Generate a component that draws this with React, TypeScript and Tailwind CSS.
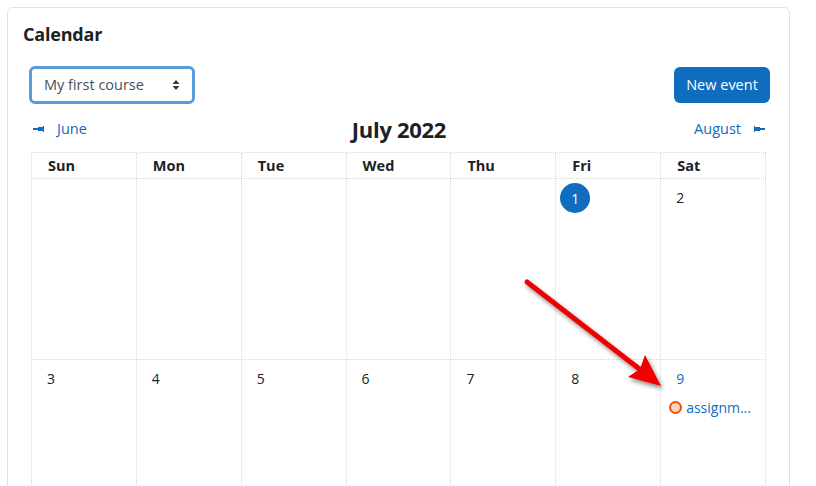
import React from "react";

const days = ["Sun", "Mon", "Tue", "Wed", "Thu", "Fri", "Sat"];

type Cell = { day?: number; today?: boolean; link?: boolean; event?: string };

const weeks: Cell[][] = [
  [{}, {}, {}, {}, {}, { day: 1, today: true }, { day: 2 }],
  [
    { day: 3 },
    { day: 4 },
    { day: 5 },
    { day: 6 },
    { day: 7 },
    { day: 8 },
    { day: 9, link: true, event: "assignm..." },
  ],
];

const PrevArrow = () => (
  <svg width="11" height="6" viewBox="0 0 11 6" className="mr-[13px]">
    <rect x="0" y="2" width="5" height="2" fill="#0f6cbf" />
    <rect x="5" y="1" width="5" height="4" fill="#0f6cbf" />
    <rect x="10" y="0" width="1" height="6" fill="#0f6cbf" />
  </svg>
);

const NextArrow = () => (
  <svg width="11" height="6" viewBox="0 0 11 6" className="ml-[13px]">
    <rect x="0" y="0" width="1" height="6" fill="#0f6cbf" />
    <rect x="1" y="1" width="5" height="4" fill="#0f6cbf" />
    <rect x="6" y="2" width="5" height="2" fill="#0f6cbf" />
  </svg>
);

const RedArrow = () => (
  <svg className="absolute left-0 top-0 pointer-events-none" width="816" height="486">
    <defs>
      <filter id="shadow" x="-20%" y="-20%" width="140%" height="140%">
        <feDropShadow dx="2" dy="3" stdDeviation="2" floodColor="#000" floodOpacity="0.45" />
      </filter>
    </defs>
    <g filter="url(#shadow)">
      <line x1="527" y1="282" x2="642" y2="371" stroke="#ee0000" strokeWidth="5" strokeLinecap="round" />
      <polygon points="661,386 628,377 640,369 645,355" fill="#ee0000" />
    </g>
  </svg>
);

export default function App() {
  return (
    <div
      className="relative w-[816px] h-[486px] overflow-hidden bg-white text-[#1d2125]"
      style={{ fontFamily: '"Open Sans", "Liberation Sans", sans-serif' }}
    >
      <div className="ml-[7px] mt-[7px] w-[783px] h-[520px] border border-[#dee2e6] rounded-[6px] px-[15px] pt-[13px]">
        <h2 className="text-[18px] font-bold leading-[26px] tracking-[-0.2px]">Calendar</h2>

        <div className="mt-[19px] ml-[6px] flex items-center justify-between w-[741px]">
          <div className="w-[166px] h-[38px] rounded-[6px] border-[3px] border-[#5b9bd9] flex items-center justify-between pl-[12px] pr-[12px]">
            <span className="text-[14.5px] text-[#495057]">My first course</span>
            <svg width="8" height="12" viewBox="0 0 8 12">
              <polygon points="4,1 7.5,5 0.5,5" fill="#343a40" />
              <polygon points="0.5,7 7.5,7 4,11" fill="#343a40" />
            </svg>
          </div>
          <button className="w-[96px] h-[36px] rounded-[6px] bg-[#0f6cbf] text-white text-[14.5px]">
            New event
          </button>
        </div>

        <div className="mt-[11px] ml-[10px] w-[732px] flex items-center justify-between h-[28px]">
          <a className="flex items-center text-[#0f6cbf] text-[14.5px] w-[110px]">
            <PrevArrow />
            June
          </a>
          <h3 className="text-[22px] font-bold tracking-[-0.3px]">July 2022</h3>
          <a className="flex items-center justify-end text-[#0f6cbf] text-[14.5px] w-[110px]">
            August
            <NextArrow />
          </a>
        </div>

        <div className="mt-[9px] ml-[8px] w-[735px] border-t border-l border-dotted border-[#d6d9dd]">
          <div className="grid grid-cols-7 h-[26px]">
            {days.map(d => (
              <div
                key={d}
                className="border-r border-b border-dotted border-[#d6d9dd] pl-[16px] text-[14.5px] font-bold leading-[25px]"
              >
                {d}
              </div>
            ))}
          </div>
          {weeks.map((week, wi) => (
            <div key={wi} className="grid grid-cols-7 h-[181px]">
              {week.map((c, ci) => (
                <div key={ci} className="border-r border-b border-dotted border-[#d6d9dd] pt-[4px]">
                  {c.day !== undefined &&
                    (c.today ? (
                      <div className="ml-[4px] w-[30px] h-[30px] rounded-full bg-[#0f6cbf] text-white text-[14px] flex items-center justify-center">
                        {c.day}
                      </div>
                    ) : (
                      <div
                        className={`pl-[15px] h-[30px] leading-[30px] text-[14px] ${c.link ? "text-[#0f6cbf]" : ""}`}
                      >
                        {c.day}
                      </div>
                    ))}
                  {c.event && (
                    <div className="flex items-center pl-[8px] mt-[3px]">
                      <span className="w-[13px] h-[13px] rounded-full border-2 border-[#e0580f] bg-[#fdd3bd] mr-[4px]" />
                      <span className="text-[14px] text-[#0f6cbf]">{c.event}</span>
                    </div>
                  )}
                </div>
              ))}
            </div>
          ))}
        </div>
      </div>
      <RedArrow />
    </div>
  );
}
